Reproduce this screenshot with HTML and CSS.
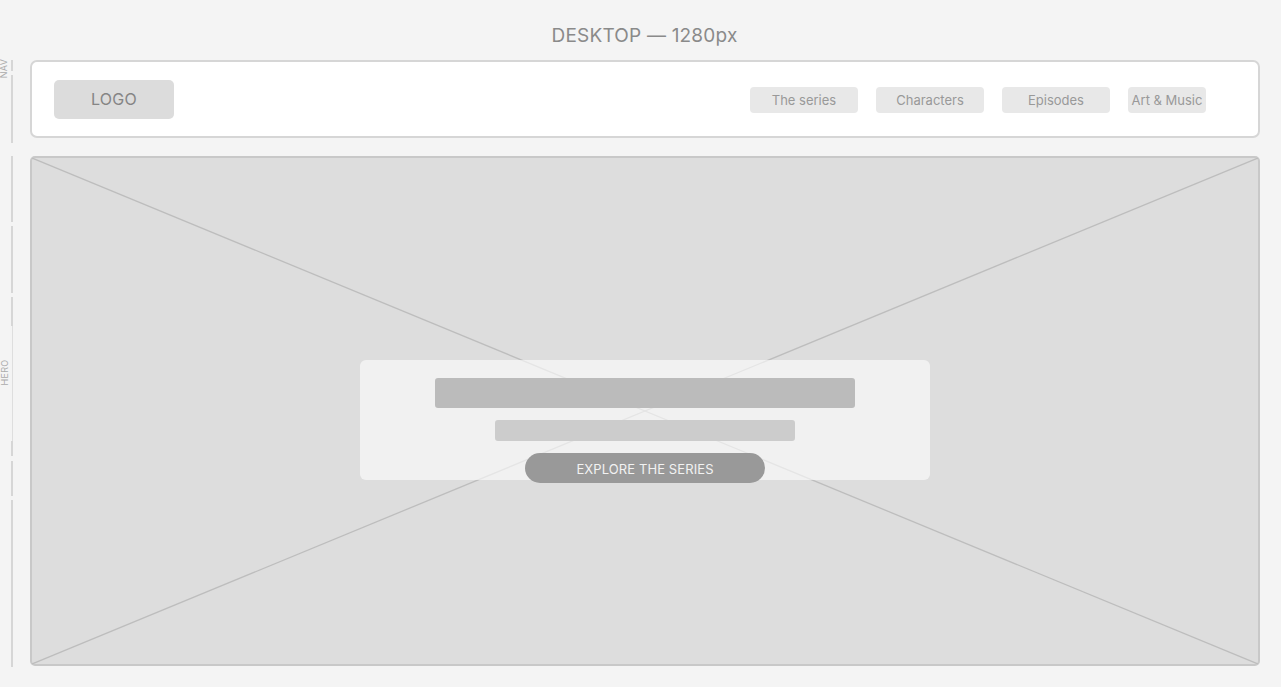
FILE: index.html
```html
<!DOCTYPE html>
<html lang="en">
<head>
<meta charset="utf-8">
<title>Desktop wireframe</title>
<link rel="stylesheet" href="styles.css">
</head>
<body>
<div class="page">
  <h1 class="frame-title">DESKTOP — 1280px</h1>
  <div class="rows">
    <div class="row row-nav">
      <div class="ruler ruler-nav">
        <span class="ruler-label label-nav">NAV</span>
        <div class="seg seg-a"></div>
        <div class="seg seg-b"></div>
      </div>
      <header class="nav">
        <div class="logo">LOGO</div>
        <nav class="menu">
          <a class="menu-item">The series</a>
          <a class="menu-item">Characters</a>
          <a class="menu-item">Episodes</a>
          <a class="menu-item menu-item-narrow">Art &amp; Music</a>
        </nav>
      </header>
    </div>
    <div class="row row-hero">
      <div class="ruler ruler-hero">
        <span class="ruler-label label-hero">HERO</span>
        <div class="seg h1"></div>
        <div class="seg h2"></div>
        <div class="seg h3"></div>
        <div class="seg h3b"></div>
        <div class="seg h3c"></div>
        <div class="seg h4"></div>
        <div class="seg h5"></div>
      </div>
      <section class="hero">
        <svg class="placeholder" viewBox="0 0 100 100" preserveAspectRatio="none">
          <line x1="0" y1="0" x2="100" y2="100" vector-effect="non-scaling-stroke"/>
          <line x1="100" y1="0" x2="0" y2="100" vector-effect="non-scaling-stroke"/>
        </svg>
        <div class="hero-card">
          <div class="bar bar-title"></div>
          <div class="bar bar-sub"></div>
          <button class="cta">EXPLORE THE SERIES</button>
        </div>
      </section>
    </div>
  </div>
</div>
</body>
</html>
```
FILE: styles.css
```css
* { box-sizing: border-box; }
html, body { margin: 0; padding: 0; }
body {
  background: #f4f4f4;
  font-family: Inter, "Liberation Sans", sans-serif;
  width: 1281px;
  height: 687px;
  overflow: hidden;
}
.page {
  display: flex;
  flex-direction: column;
  padding-top: 24px;
}
.frame-title {
  margin: 0;
  height: 22px;
  line-height: 24px;
  text-align: center;
  font-size: 19px;
  font-weight: 400;
  color: #8a8a8a;
  letter-spacing: 0.2px;
  padding-left: 8px;
}
.rows {
  display: flex;
  flex-direction: column;
  gap: 13px;
  margin-top: 14px;
  margin-right: 21px;
}
.row {
  display: grid;
  grid-template-columns: 30px 1fr;
  align-items: start;
}
.ruler {
  position: relative;
  display: flex;
  flex-direction: column;
  padding-left: 11px;
}
.seg {
  width: 2px;
  background: #d6d6d6;
  flex-shrink: 0;
}
.ruler-label {
  position: absolute;
  left: -4px;
  font-size: 9px;
  color: #ababab;
  transform: rotate(-90deg);
  transform-origin: center;
  line-height: 9px;
  letter-spacing: 0.3px;
}
.label-nav { top: 4px; left: -6px; }
.label-hero { top: 212px; left: -8px; }

.ruler-nav { height: 83px; }
.seg-a { height: 11px; }
.seg-b { height: 68px; margin-top: 4px; }

.ruler-hero { height: 509px; }
.h1 { height: 66px; }
.h2 { height: 67px; margin-top: 4px; }
.h3 { height: 29px; margin-top: 4px; }
.h3b { height: 115px; width: 1px; margin-left: 1px; background: #dedede; }
.h3c { height: 15px; }
.h4 { height: 35px; margin-top: 5px; }
.h5 { height: 167px; margin-top: 4px; }

.nav {
  height: 78px;
  background: #fff;
  border: 2px solid #d6d6d6;
  border-radius: 7px;
  display: flex;
  align-items: center;
  justify-content: space-between;
  padding: 0 52px 0 22px;
}
.logo {
  width: 120px;
  height: 39px;
  background: #dcdcdc;
  border-radius: 5px;
  display: flex;
  align-items: center;
  justify-content: center;
  font-size: 16px;
  color: #858585;
  letter-spacing: 0.3px;
}
.menu {
  display: flex;
  gap: 18px;
  margin-top: 2px;
}
.menu-item {
  width: 108px;
  height: 26px;
  background: #e8e8e8;
  border-radius: 4px;
  display: flex;
  align-items: center;
  justify-content: center;
  font-size: 13px;
  color: #999;
}
.menu-item-narrow { width: 78px; white-space: nowrap; }

.hero {
  position: relative;
  height: 510px;
  background: #dddddd;
  border: 2px solid #c8c8c8;
  border-radius: 5px;
  display: flex;
  justify-content: center;
  padding-top: 202px;
}
.placeholder {
  position: absolute;
  inset: 0;
  width: 100%;
  height: 100%;
}
.placeholder line {
  stroke: #bdbdbd;
  stroke-width: 1.3;
}
.hero-card {
  position: relative;
  width: 570px;
  height: 120px;
  background: rgba(255, 255, 255, 0.6);
  border-radius: 6px;
  display: flex;
  flex-direction: column;
  align-items: center;
  padding-top: 18px;
}
.bar { border-radius: 3px; flex-shrink: 0; }
.bar-title {
  width: 420px;
  height: 30px;
  background: #bbbbbb;
}
.bar-sub {
  width: 300px;
  height: 21px;
  background: #cccccc;
  margin-top: 12px;
}
.cta {
  margin-top: 12px;
  flex-shrink: 0;
  width: 240px;
  height: 30px;
  border: 0;
  border-radius: 15px;
  background: #999999;
  color: #f2f2f2;
  font-family: Inter, "Liberation Sans", sans-serif;
  font-size: 13px;
  letter-spacing: 0.1px;
  padding: 1px 0 0;
}
```
